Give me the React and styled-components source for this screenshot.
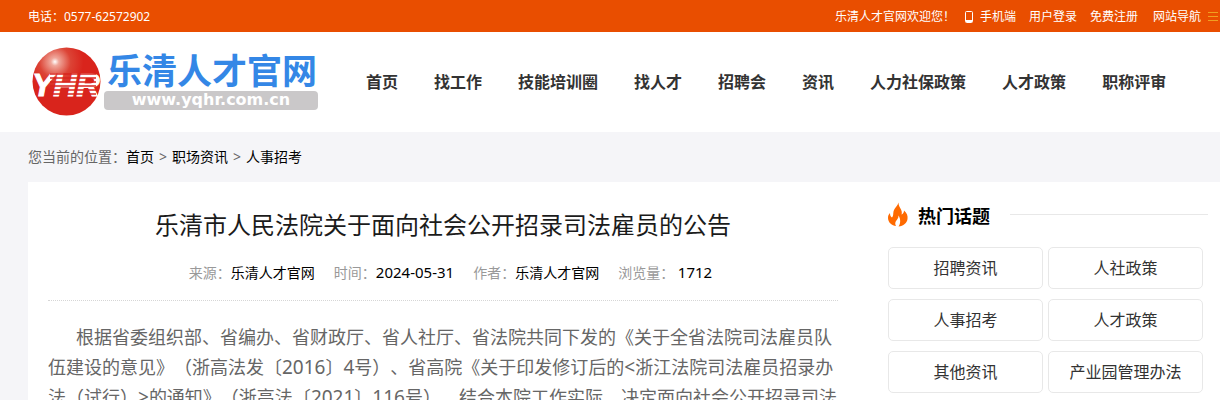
import React from 'react'
// style
import styled, { createGlobalStyle } from 'styled-components'

const GlobalStyle = createGlobalStyle`
  * {
    box-sizing: border-box;
  }

  body {
    margin: 0;
    background: #f5f5f8;
    color: #666;
    font-family: "Noto Sans", "Noto Sans CJK SC", sans-serif;
    font-size: 14px;
    text-spacing-trim: space-all;
    overflow-x: hidden;
  }

  a {
    color: inherit;
    text-decoration: none;
  }
`

const TopBar = styled.div`
  display: flex;
  justify-content: space-between;
  height: 32px;
  padding: 2px 0 0 28px;
  background: #e94e00;
  color: #fff;
  font-size: 12px;
  line-height: 30px;
  white-space: nowrap;
`

const TopLinks = styled.div`
  display: flex;
  align-items: center;
`

const TopLink = styled.a`
  display: flex;
  align-items: center;
  gap: 6px;
  margin-left: ${({ $gap }) => $gap || 13}px;
`

const Header = styled.header`
  display: flex;
  align-items: center;
  height: 100px;
  padding: 0 28px;
  background: #fff;
`

const Logo = styled.a`
  flex: none;
  width: 300px;
  height: 80px;
`

const Nav = styled.nav`
  display: flex;
  gap: 36px;
  margin-left: 38px;
  color: #333;
  font-size: 16px;
  font-weight: 700;
  line-height: 24px;
  white-space: nowrap;
`

const Breadcrumb = styled.div`
  height: 50px;
  padding: 0 28px;
  line-height: 50px;

  a {
    color: #000;
  }
`

const Separator = styled.span`
  margin: 0 5px;
`

const Main = styled.main`
  display: flex;
  gap: 30px;
  margin-left: 28px;
  background: #fff;
`

const Article = styled.article`
  flex: 1;
  min-width: 0;
  padding: 20px 20px 0;
`

const Title = styled.h1`
  margin: 0;
  color: #1b1b1b;
  font-size: 24px;
  font-weight: 400;
  line-height: 46px;
  text-align: center;
`

const Meta = styled.div`
  display: flex;
  justify-content: center;
  gap: 19px;
  height: 53px;
  padding-left: 15px;
  border-bottom: 1px dotted #d6d6d6;
  color: #999;
  line-height: 50px;

  b {
    color: #000;
    font-weight: 400;
  }
`

// latin digits run a step larger than the chinese text around them
const Num = styled.span`
  font-size: ${({ $size }) => $size}px;
  line-height: 1;
`

const Paragraph = styled.p`
  margin: 21px 0 0;
  font-size: 18px;
  line-height: 30px;
  text-indent: 28px;
`

const Sidebar = styled.aside`
  flex: none;
  width: 332px;
  padding: 18px 12px 0 0;
`

const SideHeading = styled.div`
  display: flex;
  align-items: center;
  height: 32px;

  svg {
    margin-bottom: 2px;
  }

  h2 {
    margin: 0 20px 0 10px;
    color: #000;
    font-size: 18px;
    font-weight: 700;
    line-height: 32px;
  }
`

const Rule = styled.span`
  flex: 1;
  height: 1px;
  margin-bottom: 4px;
  background: #e8e8e8;
`

const Topics = styled.div`
  display: grid;
  grid-template-columns: 1fr 1fr;
  gap: 10px 5px;
  margin: 15px 5px 0 0;
`

const Topic = styled.a`
  height: 42px;
  border: 1px solid #e8e8e8;
  border-radius: 5px;
  color: #333;
  font-size: 16px;
  line-height: 40px;
  text-align: center;
`

const navMenu = ['首页', '找工作', '技能培训圈', '找人才', '招聘会', '资讯', '人力社保政策', '人才政策', '职称评审']

const topics = ['招聘资讯', '人社政策', '人事招考', '人才政策', '其他资讯', '产业园管理办法']

const metaList = [
  { id: 1, label: '来源：', value: '乐清人才官网' },
  { id: 2, label: '时间：', value: <Num $size={15}>2024-05-31</Num> },
  { id: 3, label: '作者：', value: '乐清人才官网' },
  { id: 4, label: '浏览量： ', value: <Num $size={15}>1712</Num> },
]

const stripes = [74, 78, 82, 86, 90, 94]

const LogoMark = () => (
  <svg width="300" height="80" viewBox="28 42 300 80" role="img" aria-label="乐清人才官网">
    <defs>
      <radialGradient id="ball" cx="0.33" cy="0.21" r="0.42">
        <stop offset="0" stopColor="#fff" />
        <stop offset="0.14" stopColor="#f0a79b" />
        <stop offset="0.55" stopColor="#dc4436" />
        <stop offset="1" stopColor="#d9241c" />
      </radialGradient>
    </defs>
    <circle cx="66.500" cy="81.500" r="34" fill="url(#ball)" />
    <text x="32" y="96" fill="#fff" stroke="#fff" strokeWidth="1" fontFamily="Liberation Sans, sans-serif" fontSize="32" fontWeight="700" fontStyle="italic">YHR</text>
    {stripes.map(y => <path key={y} d={`M50 ${y}h46`} stroke="#d9241c" strokeWidth="1.300" />)}
    <text x="107" y="84" fill="#3487e6" fontFamily="Noto Sans CJK SC, sans-serif" fontSize="35" fontWeight="700">乐清人才官网</text>
    <rect x="104" y="91" width="214" height="19" rx="4" fill="#cac8c9" />
    <text x="211" y="105" textAnchor="middle" fill="#fff" fontFamily="DejaVu Sans, sans-serif" fontSize="16" fontWeight="700">www.yqhr.com.cn</text>
  </svg>
)

const PhoneIcon = () => (
  <svg width="9" height="12" viewBox="0 0 9 12" fill="none" aria-hidden="true">
    <rect x="0.500" y="0.500" width="7" height="11" rx="1" stroke="#fff" />
    <path d="M1 10h6" stroke="#fff" strokeWidth="2" />
  </svg>
)

const MenuIcon = () => (
  <svg width="13" height="12" viewBox="0 0 13 12" aria-hidden="true">
    <path d="M1 1.500h10M1 5.500h10M1 9.500h10" stroke="#f0a020" />
  </svg>
)

const FireIcon = () => (
  <svg width="20" height="26" viewBox="0 0 20 26" aria-hidden="true">
    <path
      d="M10.500 0.500C10.500 4 12 5.500 13 7.500C14 9.500 14 11 13.500 12.500C15 12 16 10.500 16 8.500C19 11 20 14 19.500 17C19 21 15.500 24 10.500 24.500C12.500 22 13 17.500 10.500 13.500C10.500 16.500 9 17.500 8 19C7 20.500 7 22.500 8 24C4 23.500 0 20.500 0 16C0 14 0.500 12.500 2 11C2 13 2.500 14.500 4 15.500C5.500 14 5 12 5.500 9.500C6.500 5.500 9.500 4.500 10.500 0.500Z"
      fill="#ff6a00"
    />
  </svg>
)

const App = () => {
  return (
    <>
      <GlobalStyle />

      {/* top bar */}
      <TopBar>
        <span>电话：0577-62572902</span>
        <TopLinks>
          <span>乐清人才官网欢迎您！</span>
          <TopLink href="#" $gap={10}><PhoneIcon />手机端</TopLink>
          <TopLink href="#">用户登录</TopLink>
          <TopLink href="#">免费注册</TopLink>
          <TopLink href="#" $gap={15}>网站导航<MenuIcon /></TopLink>
        </TopLinks>
      </TopBar>

      {/* header */}
      <Header>
        <Logo href="#"><LogoMark /></Logo>
        <Nav>
          {navMenu.map(item => <a key={item} href="#">{item}</a>)}
        </Nav>
      </Header>

      <Breadcrumb>
        您当前的位置：<a href="#">首页</a><Separator>&gt;</Separator><a href="#">职场资讯</a><Separator>&gt;</Separator><a href="#">人事招考</a>
      </Breadcrumb>

      <Main>
        {/* article */}
        <Article>
          <Title>乐清市人民法院关于面向社会公开招录司法雇员的公告</Title>
          <Meta>
            {metaList.map(item => <span key={item.id}>{item.label}<b>{item.value}</b></span>)}
          </Meta>
          <Paragraph>
            根据省委组织部、省编办、省财政厅、省人社厅、省法院共同下发的《关于全省法院司法雇员队伍建设的意见》（浙高法发〔<Num $size={19}>2016</Num>〕<Num $size={19}>4</Num>号）、省高院《关于印发修订后的<Num $size={19}>&lt;</Num>浙江法院司法雇员招录办法（试行）<Num $size={19}>&gt;</Num>的通知》（浙高法〔<Num $size={19}>2021</Num>〕<Num $size={19}>116</Num>号），结合本院工作实际，决定面向社会公开招录司法
          </Paragraph>
        </Article>

        {/* hot topics */}
        <Sidebar>
          <SideHeading>
            <FireIcon />
            <h2>热门话题</h2>
            <Rule />
          </SideHeading>
          <Topics>
            {topics.map(item => <Topic key={item} href="#">{item}</Topic>)}
          </Topics>
        </Sidebar>
      </Main>
    </>
  )
}

export default App
